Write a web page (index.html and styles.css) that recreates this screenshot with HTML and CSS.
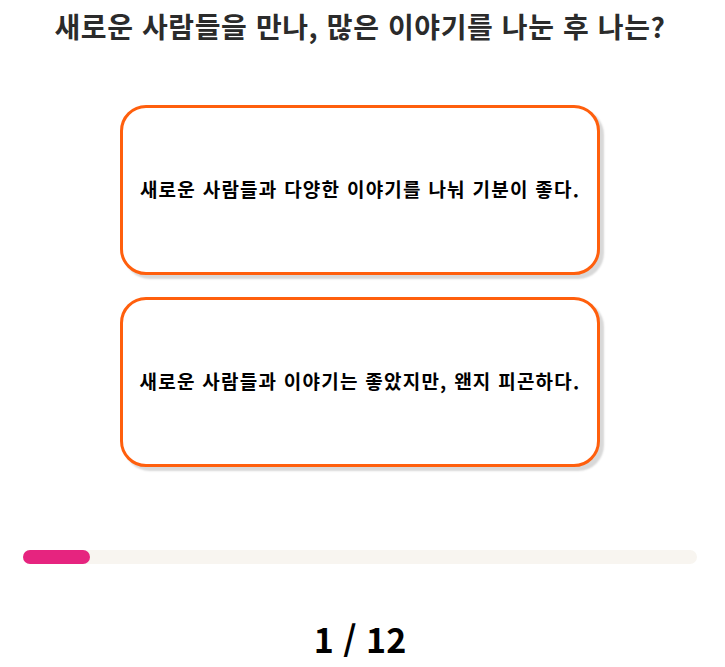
FILE: index.html
```html
<!DOCTYPE html>
<html lang="ko">
<head>
<meta charset="utf-8">
<link rel="stylesheet" href="styles.css">
</head>
<body>
<main class="page">
  <h1 class="question">새로운 사람들을 만나, 많은 이야기를 나눈 후 나는?</h1>
  <div class="options">
    <button class="option">새로운 사람들과 다양한 이야기를 나눠 기분이 좋다.</button>
    <button class="option">새로운 사람들과 이야기는 좋았지만, 왠지 피곤하다.</button>
  </div>
  <div class="progress"><div class="progress-fill" style="width:10%"></div></div>
  <div class="counter">1 / 12</div>
</main>
</body>
</html>
```
FILE: styles.css
```css
html, body {
  margin: 0;
  padding: 0;
  background: #ffffff;
}
.page {
  padding: 0 28px 0 23px;
  font-family: "Noto Sans CJK KR", "Noto Sans", sans-serif;
  display: flex;
  flex-direction: column;
  align-items: center;
}
.question {
  margin: 0;
  padding-top: 6px;
  height: 43px;
  font-size: 28px;
  line-height: 40px;
  letter-spacing: 0.6px;
  font-weight: 700;
  color: #2b2b2b;
  text-align: center;
}
.options {
  margin-top: 56px;
  display: flex;
  flex-direction: column;
  gap: 22px;
}
.option {
  width: 480px;
  height: 170px;
  background: #ffffff;
  border: 3px solid #ff5f0d;
  border-radius: 26px;
  box-shadow: 4px 4px 2px #d8d8d8;
  font-family: inherit;
  font-size: 19px;
  letter-spacing: 1.25px;
  font-weight: 700;
  color: #000000;
  padding: 0 0 3px 0;
  display: flex;
  align-items: center;
  justify-content: center;
}
.progress {
  align-self: stretch;
  margin-top: 83px;
  height: 14px;
  background: #f8f5f0;
  border-radius: 7px;
}
.progress-fill {
  height: 100%;
  background: #e6247f;
  border-radius: 7px;
}
.counter {
  margin-top: 52px;
  font-size: 34px;
  line-height: 46px;
  font-weight: 700;
  color: #000000;
}
```
